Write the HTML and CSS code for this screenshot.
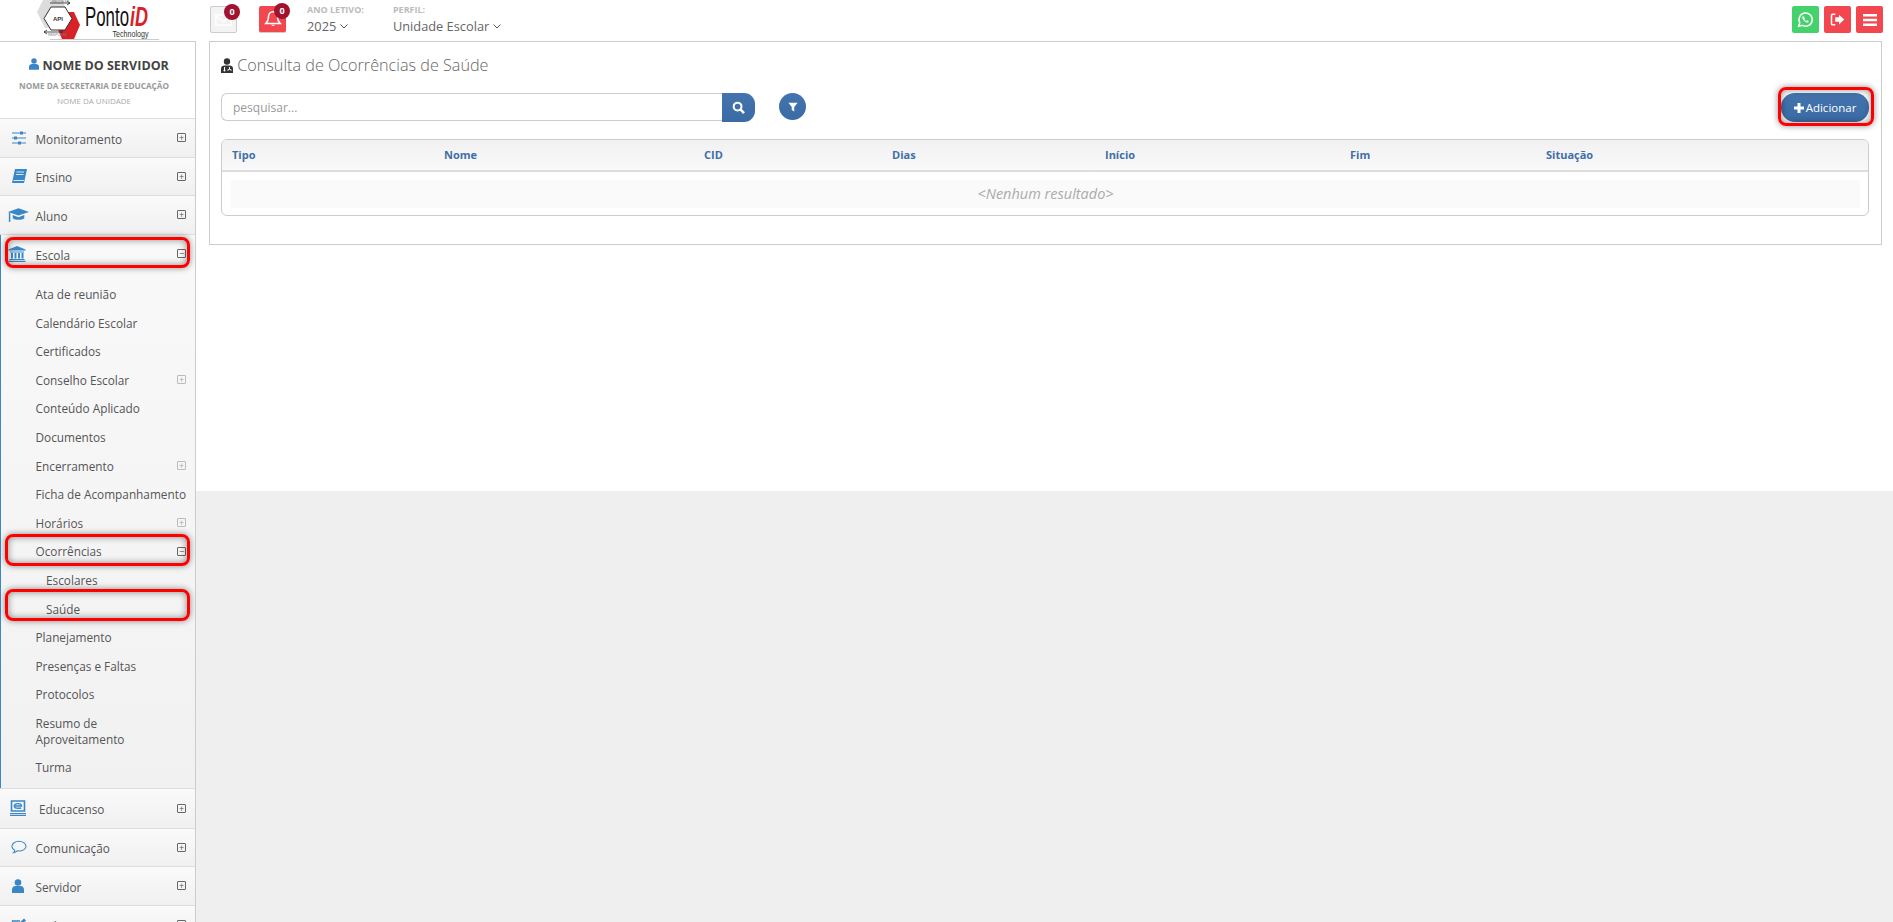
FILE: index.html
```html
<!DOCTYPE html>
<html lang="pt-BR">
<head>
  <meta charset="UTF-8" />
  <title>Consulta de Ocorrências de Saúde</title>
  <link rel="stylesheet" href="styles.css">
</head>
<body>

  <header class="topbar">
    <svg class="logo" viewBox="0 0 122 40" width="122" height="40">
      <polygon points="0,12 8,-4 24,-4 30,12 24,28 8,28" fill="#dcdcdc"/>
      <polygon points="19,25 25,12 37,12 43,25 37,39 25,39" fill="#d92127"/>
      <polygon points="7,18.500 14,7 28,7 35,18.500 28,30 14,30" fill="#fff" stroke="#333" stroke-width="1"/>
      <text x="21" y="20.500" class="logo-api">API</text>
      <path d="M13 3H33M33 3l-3-2M33 3l-3 2M7 32H26M7 32l3-2M7 32l3 2" stroke="#222" stroke-width="0.8" fill="none"/>
      <text x="15" y="2.500" class="logo-tiny">REQUEST</text>
      <text x="11" y="36" class="logo-tiny">RESPONSE</text>
      <text x="48" y="25.500" class="logo-ponto" textLength="44" lengthAdjust="spacingAndGlyphs">Ponto</text>
      <text x="93" y="25.500" class="logo-id" textLength="18" lengthAdjust="spacingAndGlyphs">iD</text>
      <text x="75.500" y="37" class="logo-tech" textLength="36" lengthAdjust="spacingAndGlyphs">Technology</text>
      <line x1="13" y1="39.500" x2="122" y2="39.500" stroke="#ccc"/>
    </svg>

    <div class="tile tile-mail">
      <svg viewBox="0 0 20 16" width="17" height="14"><path d="M1 2h18v12H1zM1 3l9 7 9-7" fill="none" stroke="#fff" stroke-width="1.600"/></svg>
      <span class="badge">0</span>
    </div>
    <div class="tile tile-bell">
      <svg viewBox="0 0 20 20" width="18" height="18"><path d="M10 2c-3 0-5 2.400-5 5.500 0 4-1 5.500-3 7.500h16c-2-2-3-3.500-3-7.500C15 4.400 13 2 10 2z" fill="none" stroke="#fff" stroke-width="1.800"/><path d="M8 16.500c.3 1.600 3.700 1.600 4 0z" fill="#fff"/></svg>
      <span class="badge">0</span>
    </div>

    <div class="picker picker-ano">
      <small>ANO LETIVO:</small>
      <span>2025 <svg class="chev" viewBox="0 0 8 5" width="8" height="5"><path d="M.5.5 4 4 7.500.5" fill="none" stroke="#555"/></svg></span>
    </div>
    <div class="picker">
      <small>PERFIL:</small>
      <span>Unidade Escolar <svg class="chev" viewBox="0 0 8 5" width="8" height="5"><path d="M.5.5 4 4 7.500.5" fill="none" stroke="#555"/></svg></span>
    </div>

    <div class="top-actions">
      <div class="square green">
        <svg viewBox="0 0 20 20" width="17" height="17"><path d="M2 18l1.200-4.300A7.800 7.800 0 1 1 6.300 16.900z" fill="none" stroke="#fff" stroke-width="1.800"/><path d="M7.200 5.800c-1 .6-1.200 2-.4 3.500 1 1.800 2.400 3.200 4.300 4 1.200.5 2.300.1 2.800-.9l-2-1.400-1 .8c-1-.5-1.800-1.300-2.300-2.300l.8-1z" fill="#fff"/></svg>
      </div>
      <div class="square red">
        <svg viewBox="0 0 20 20" width="15" height="15"><path d="M7 3H3.500Q2 3 2 4.500v11Q2 17 3.500 17H7" fill="none" stroke="#fff" stroke-width="2"/><path d="M7 7h5V3.500l7 6.500-7 6.500V13H7z" fill="#fff"/></svg>
      </div>
      <div class="square red">
        <svg viewBox="0 0 14 12" width="14" height="12"><path d="M0 0h14v2.600H0zM0 4.700h14v2.600H0zM0 9.400h14V12H0z" fill="#fff"/></svg>
      </div>
    </div>
  </header>

  <div class="layout">
    <aside class="sidebar">
      <div class="profile">
        <h2>
          <svg viewBox="0 0 12 14" width="10" height="12"><circle cx="6" cy="3.500" r="3.300" fill="#3a87c8"/><path d="M0 14V10.500C0 8 2 7 3.500 7h5C10 7 12 8 12 10.500V14z" fill="#3a87c8"/></svg>
          NOME DO SERVIDOR
        </h2>
        <p class="org">NOME DA SECRETARIA DE EDUCAÇÃO</p>
        <p class="unit">NOME DA UNIDADE</p>
      </div>

      <nav>
        <div class="menu-item">
          <svg class="ico" viewBox="0 0 16 14" width="16" height="14"><path d="M1 2h14M1 7h14M1 12h14" stroke="#3a87c8"/><path d="M9 .5h3v3H9zM3 5.500h3v3H3zM7 10.500h3v3H7z" fill="#3a87c8"/></svg>
          <span class="label">Monitoramento</span><i class="tog">+</i>
        </div>
        <div class="menu-item">
          <svg class="ico" viewBox="0 0 16 14" width="16" height="14"><path d="M4 0H16L13 14H1Z" fill="#3a87c8"/><path d="M2.500 11.500H13M5.500 3H13M5 5.500H12.500" stroke="#fff" stroke-width=".8"/></svg>
          <span class="label">Ensino</span><i class="tog">+</i>
        </div>
        <div class="menu-item">
          <svg class="ico ico-wide" viewBox="0 0 20 14" width="21" height="15"><path d="M10 1 0 4.500 10 8l10-3.500z" fill="#3a87c8"/><path d="M4.500 7.500v3c2.500 2 8.500 2 11 0v-3L10 9.500z" fill="#3a87c8"/><path d="M1.500 5v9" stroke="#3a87c8" stroke-width="1.400"/></svg>
          <span class="label">Aluno</span><i class="tog">+</i>
        </div>

        <div class="menu-open">
          <div class="menu-item">
            <svg class="ico ico-wide" viewBox="0 0 18 16" width="18" height="16"><path d="M9 0 .5 3.500v1h17v-1z" fill="#3a87c8"/><path d="M2 5.500h14v1H2zM3 7h2v5.500H3zM6.500 7h2v5.500h-2zM10 7h2v5.500h-2zM13.500 7h2v5.500h-2zM1.500 13h15v1h-15zM.5 14.700h17V16H.5z" fill="#3a87c8"/></svg>
            <span class="label">Escola</span><i class="tog">−</i>
            <span class="mark mark-escola"></span>
          </div>
          <ul class="submenu">
            <li>Ata de reunião</li>
            <li>Calendário Escolar</li>
            <li>Certificados</li>
            <li>Conselho Escolar<i class="tog tog-soft">+</i></li>
            <li>Conteúdo Aplicado</li>
            <li>Documentos</li>
            <li>Encerramento<i class="tog tog-soft">+</i></li>
            <li>Ficha de Acompanhamento</li>
            <li>Horários<i class="tog tog-soft">+</i></li>
            <li>Ocorrências<i class="tog">−</i><span class="mark mark-ocorr"></span></li>
            <li class="child">Escolares</li>
            <li class="child">Saúde<span class="mark mark-saude"></span></li>
            <li>Planejamento</li>
            <li>Presenças e Faltas</li>
            <li>Protocolos</li>
            <li>Resumo de<br>Aproveitamento</li>
            <li>Turma</li>
          </ul>
        </div>

        <div class="menu-item menu-item-edu">
          <svg class="ico ico-edu" viewBox="0 0 16 16" width="16" height="16"><path d="M1.500 1h13v10h-13z" fill="none" stroke="#3a87c8" stroke-width="1.600"/><path d="M4 6h7.500c0-3-7-3.200-7.300 0 0 2.500 4 2.500 7 2" fill="none" stroke="#3a87c8" stroke-width="1.300"/><path d="M0 13h16v1.300H0zM0 15h16v1H0z" fill="#3a87c8"/></svg>
          <span class="label label-edu">Educacenso</span><i class="tog">+</i>
        </div>
        <div class="menu-item">
          <svg class="ico" viewBox="0 0 17 14" width="16" height="14"><path d="M8.500 1C4.400 1 1 3.300 1 6.200c0 1.800 1.200 3.300 3 4.200-.1 1-.6 1.900-1.300 2.600 1.500-.2 2.900-.9 3.900-1.900.6.100 1.300.2 1.900.2 4.100 0 7.500-2.300 7.500-5.100S12.600 1 8.500 1z" fill="none" stroke="#3a87c8" stroke-width="1.100"/></svg>
          <span class="label">Comunicação</span><i class="tog">+</i>
        </div>
        <div class="menu-item">
          <svg class="ico ico-user" viewBox="0 0 12 14" width="12" height="14"><circle cx="6" cy="3.500" r="3.300" fill="#3a87c8"/><path d="M0 14V10.500C0 8 2 7 3.500 7h5C10 7 12 8 12 10.500V14z" fill="#3a87c8"/></svg>
          <span class="label">Servidor</span><i class="tog">+</i>
        </div>
        <div class="menu-item">
          <svg class="ico" viewBox="0 0 16 14" width="16" height="14"><path d="M12 8v4.500H1.500V3H9" fill="none" stroke="#3a87c8" stroke-width="1.400"/><path d="M6 7l7-6.500 2 2L8 9H6z" fill="#3a87c8"/></svg>
          <span class="label">Cadastro</span><i class="tog">+</i>
        </div>
      </nav>
    </aside>

    <main class="content">
      <section class="panel">
        <h1>
          <svg viewBox="0 0 12 15" width="12" height="15"><circle cx="6" cy="3.500" r="3.200" fill="#333"/><path d="M0 15V10.500C0 8.500 1.500 7.500 3.500 7.500h5c2 0 3.500 1 3.500 3V15z" fill="#333"/><path d="M3.500 9v3M8.500 9v2" stroke="#fff"/><circle cx="3.500" cy="12.500" r="1" fill="#fff"/><path d="M7 13v-1.500h3V13" fill="none" stroke="#fff" stroke-width=".8"/></svg>
          Consulta de Ocorrências de Saúde
        </h1>

        <div class="toolbar">
          <input class="search" type="text" placeholder="pesquisar...">
          <button class="search-btn">
            <svg viewBox="0 0 14 14" width="13" height="13"><circle cx="6" cy="6" r="4.200" fill="none" stroke="#fff" stroke-width="2.200"/><path d="M9 9l4 4" stroke="#fff" stroke-width="2.600"/></svg>
          </button>
          <button class="filter-btn">
            <svg viewBox="0 0 12 12" width="10" height="10"><path d="M.5 1h11L7.500 6v5.500l-3-2V6z" fill="#fff"/></svg>
          </button>
          <div class="add-wrap">
            <button class="add-btn">
              <svg viewBox="0 0 10 10" width="10" height="10"><path d="M3.500 0h3v3.500H10v3H6.500V10h-3V6.500H0v-3h3.500z" fill="#fff"/></svg>
              Adicionar
            </button>
            <span class="mark mark-add"></span>
          </div>
        </div>

        <div class="table-box">
          <table>
            <thead>
              <tr>
                <th class="c-tipo">Tipo</th>
                <th class="c-nome">Nome</th>
                <th class="c-cid">CID</th>
                <th class="c-dias">Dias</th>
                <th class="c-inicio">Início</th>
                <th class="c-fim">Fim</th>
                <th>Situação</th>
              </tr>
            </thead>
            <tbody>
              <tr>
                <td colspan="7"><div class="empty">&lt;Nenhum resultado&gt;</div></td>
              </tr>
            </tbody>
          </table>
        </div>
      </section>
    </main>
  </div>

</body>
</html>
```

FILE: styles.css
```css
* {
  box-sizing: border-box;
}

html, body {
  height: 100%;
  overflow: hidden;
}

body {
  margin: 0;
  font-family: 'Open Sans', sans-serif;
  background-color: #efefef;
  color: #555;
}

/* top bar */
.topbar {
  height: 41px;
  background-color: white;
  display: flex;
  align-items: flex-start;
  padding-left: 37px;
}

.logo {
  flex: none;
  margin-right: 51px;
  overflow: hidden;
}

.logo-api {
  font: bold 6px 'Liberation Sans', sans-serif;
  text-anchor: middle;
  fill: #333;
}

.logo-tiny {
  font: 3.500px 'Liberation Sans', sans-serif;
  fill: #777;
}

.logo-ponto {
  font: 27px 'Liberation Sans', sans-serif;
  fill: #111;
}

.logo-id {
  font: italic bold 27px 'Liberation Sans', sans-serif;
  fill: #d92127;
}

.logo-tech {
  font: 9px 'Liberation Sans', sans-serif;
  fill: #333;
}

.tile {
  position: relative;
  width: 27px;
  height: 27px;
  margin-top: 6px;
  border-radius: 2px;
  display: flex;
  align-items: center;
  justify-content: center;
  flex: none;
}

.tile-mail {
  background-color: #f3f3f3;
  border: 1px solid #ccc;
}

.tile-bell {
  background-color: #f2474f;
  margin-left: 22px;
  border-bottom: 1px solid #ccc;
}

.badge {
  position: absolute;
  top: -3px;
  right: -4px;
  width: 16px;
  height: 16px;
  border-radius: 50%;
  background-color: #a0122e;
  color: white;
  font-size: 9px;
  font-weight: 700;
  line-height: 16px;
  text-align: center;
}

.picker {
  margin-top: 2px;
  display: flex;
  flex-direction: column;
  font-size: 12.8px;
  color: #666;
}

.picker small {
  font-size: 9px;
  font-weight: 700;
  line-height: 15px;
  color: #bbb;
}

.picker span {
  line-height: 19px;
}

.picker-ano {
  margin-left: 21px;
  margin-right: 29px;
}

.chev {
  vertical-align: 2px;
}

.top-actions {
  margin-left: auto;
  padding: 6px 10px 0 0;
  display: flex;
  gap: 5px;
}

.square {
  width: 27px;
  height: 27px;
  border-radius: 2px;
  display: flex;
  align-items: center;
  justify-content: center;
}

.green {
  background-color: #45d16b;
}

.red {
  background-color: #f2474f;
}

/* page */
.layout {
  display: flex;
  align-items: flex-start;
}

.sidebar {
  width: 196px;
  flex: none;
  height: 881px;
  overflow: hidden;
  background-color: #f5f5f5;
  border-top: 1px solid #ccc;
  border-right: 1px solid #ccc;
}

.profile {
  height: 76px;
  background-color: white;
  text-align: center;
  padding-top: 15px;
}

.profile h2 {
  margin: 0 0 4px;
  padding-left: 3px;
  font-size: 12.500px;
  font-weight: 700;
  line-height: 18px;
  color: #444;
}

.profile p {
  margin: 0;
  padding-right: 7px;
  line-height: 14.500px;
}

.org {
  font-size: 8.200px;
  font-weight: 700;
  color: #999;
}

.unit {
  font-size: 8px;
  color: #aaa;
}

.menu-item {
  position: relative;
  height: 38.6px;
  display: flex;
  align-items: center;
  font-size: 11.8px;
  color: #555;
  border-top: 1px solid #ddd;
  background: linear-gradient(to bottom, #fafafa, #f0f0f0);
}

.menu-item-edu {
  height: 39.7px;
}

.ico {
  position: absolute;
  left: 11px;
}

.ico-wide {
  left: 8px;
}

.ico-edu {
  left: 10px;
}

.ico-user {
  left: 12px;
}

.label {
  margin-left: 35.5px;
  padding-top: 2px;
}

.label-edu {
  margin-left: 39px;
}

.tog {
  position: absolute;
  right: 9px;
  top: 50%;
  margin-top: -4.500px;
  width: 9px;
  height: 9px;
  border: 1px solid #666;
  border-radius: 1px;
  font-size: 9px;
  font-style: normal;
  line-height: 7px;
  text-align: center;
  color: #555;
}

.tog-soft {
  border-color: #bbb;
  color: #aaa;
}

.menu-open {
  border-left: 1px solid #3a87c8;
  background: linear-gradient(to bottom, #f9f9f9, #f1f1f1);
}

.menu-open .menu-item {
  background: none;
  margin-left: -1px;
}

.submenu {
  list-style: none;
  margin: 0;
  padding: 7.3px 0 6.1px;
  font-size: 11.8px;
  color: #555;
}

.submenu li {
  position: relative;
  padding: 6.3px 0 6.3px 34.5px;
  line-height: 16px;
}

.submenu li.child {
  padding-left: 45px;
}

/* the red highlights drawn over the screenshot */
.mark {
  position: absolute;
  border: 3px solid #f00;
  border-radius: 8px;
  box-shadow: 0 0 6px rgba(0, 0, 0, 0.45), inset 0 0 7px rgba(0, 0, 0, 0.45);
  pointer-events: none;
}

.mark-escola {
  top: 2px;
  right: 5px;
  bottom: 4px;
  left: 5px;
}

.mark-ocorr {
  top: -3px;
  right: 5px;
  bottom: 0;
  left: 4px;
}

.mark-saude {
  top: -5px;
  right: 5px;
  bottom: 2px;
  left: 4px;
}

.mark-add {
  top: -6px;
  right: -5px;
  bottom: -4px;
  left: -3px;
}

.content {
  flex: 1;
  height: 450px;
  background-color: white;
  padding: 0 11px 0 13px;
}

.panel {
  border: 1px solid #ccc;
  padding: 11px 12px 29px 11px;
  height: 204px;
}

h1 {
  margin: 0 0 16px;
  font-size: 16.200px;
  font-weight: 300;
  line-height: 24px;
  color: #666;
}

h1 svg {
  vertical-align: -2px;
}

.toolbar {
  display: flex;
  align-items: flex-start;
  height: 29px;
  margin-bottom: 17px;
}

.search {
  width: 501px;
  height: 28px;
  padding: 0 11px;
  border: 1px solid #ccc;
  border-right: 0;
  border-radius: 6px 0 0 6px;
  font-family: 'Open Sans', sans-serif;
  font-size: 12px;
  outline: none;
}

.search::placeholder {
  color: #999;
}

.search-btn, .filter-btn, .add-btn {
  border: 0;
  padding: 0;
  color: white;
  background: linear-gradient(to bottom, #4474ae, #3b6ba5);
  display: flex;
  align-items: center;
  justify-content: center;
}

.search-btn {
  width: 33px;
  height: 29px;
  border-radius: 0 11px 11px 0;
}

.filter-btn {
  width: 27px;
  height: 27px;
  margin-left: 24px;
  border-radius: 50%;
}

.add-wrap {
  position: relative;
  margin-left: auto;
}

.add-btn {
  width: 88px;
  height: 29px;
  gap: 2px;
  border-radius: 14px;
  font-family: 'Open Sans', sans-serif;
  font-size: 11.5px;
}

.table-box {
  border: 1px solid #ccc;
  border-radius: 6px;
  overflow: hidden;
}

table {
  width: 100%;
  table-layout: fixed;
  border-collapse: collapse;
}

th {
  height: 31px;
  padding: 0 0 1px 10px;
  text-align: left;
  font-size: 11px;
  font-weight: 700;
  color: #3f6fa8;
  background: linear-gradient(to bottom, #f1f1f1, #f9f9f9);
  border-bottom: 2px solid #ddd;
}

.c-tipo { width: 212px; }
.c-nome { width: 260px; }
.c-cid { width: 188px; }
.c-dias { width: 213px; }
.c-inicio { width: 245px; }
.c-fim { width: 196px; }

td {
  padding: 8px 8px 7px 9px;
}

.empty {
  height: 28px;
  background-color: #fafafa;
  font-size: 14.500px;
  font-style: italic;
  line-height: 28px;
  text-align: center;
  color: #aaa;
}
```
